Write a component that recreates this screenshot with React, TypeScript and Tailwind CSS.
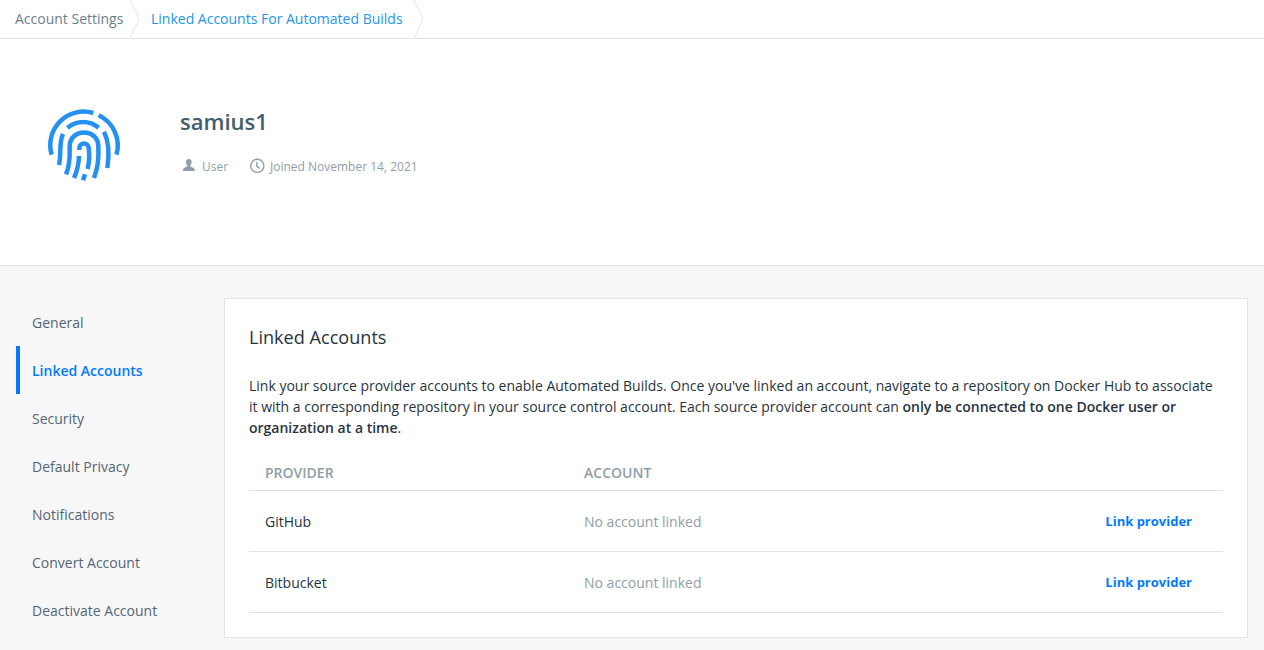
import React from "react";

const navItems = [
  "General",
  "Linked Accounts",
  "Security",
  "Default Privacy",
  "Notifications",
  "Convert Account",
  "Deactivate Account",
];

const providers = ["GitHub", "Bitbucket"];

function Chevron() {
  return (
    <svg width="11" height="39" viewBox="0 0 11 39" fill="none" className="shrink-0">
      <path d="M-1 38.5 H0.500" stroke="#fff" />
      <path d="M0.1 -0.5 L9.1 19 L0.1 38.5" stroke="#e4e6e8" />
    </svg>
  );
}

function Fingerprint() {
  return (
    <svg width="90" height="90" viewBox="0 0 270 270" fill="none" stroke="#2490f2" strokeWidth="13.5">
      <path d="M35 164 A100.500 100.500 0 0 1 160 39" />
      <path d="M176 46 A100.500 100.500 0 0 1 229.500 164" />
      <path d="M82 83 C112 60 148 60 176 83" />
      <path d="M69 102 C56 128 65 158 57 195" />
      <path d="M192 95 C207 125 208 165 202 204" />
      <path d="M78 223 C92 190 89 165 89 140 C89 83 175 83 175 140 C177 175 174 203 162 234" />
      <path d="M118 150 V144 C118 126 146 126 146 144 C149 165 148 185 143 207" />
      <path d="M117 168 C116 193 112 213 102 234" />
      <path d="M135 223 L129 241" />
    </svg>
  );
}

export default function App() {
  return (
    <div className="flex h-[650px] w-[1264px] flex-col overflow-hidden bg-[#f7f7f7] font-['Open_Sans',sans-serif] text-sm text-[#27343f]">
      <nav className="flex h-[39px] shrink-0 border-b border-[#e1e2e4] bg-white leading-[38px]">
        <a className="w-[130px] pl-[15px] text-[#6c7f8e]">Account Settings</a>
        <Chevron />
        <a className="w-[273px] pl-[10px] text-[#2496ed]">Linked Accounts For Automated Builds</a>
        <Chevron />
      </nav>

      <header className="flex h-[227px] shrink-0 border-b border-[#e1e2e4] bg-white pl-10 pt-[61px]">
        <Fingerprint />
        <div className="pl-[50px] pt-[3px]">
          <h1 className="text-[22px] font-semibold leading-[36px] text-[#445d6e]">samius1</h1>
          <div className="mt-[18px] flex h-5 items-center text-xs text-[#8f9ea8]">
            <svg width="18" height="18" viewBox="0 0 18 18" fill="currentColor" className="mr-1 -translate-y-px">
              <path d="M8.8 2C6.9 2 5.9 3.2 6 5c.1 1.500.5 2.500 1.200 3.300v1.200c-1.700.7-4 1.300-4.200 3.100V14h11.600v-1.400c-.2-1.800-2.500-2.400-4.200-3.100V8.300c.7-.8 1.100-1.800 1.200-3.300C11.700 3.200 10.700 2 8.800 2Z" />
            </svg>
            <span className="w-[46px]">User</span>
            <svg width="18" height="18" viewBox="0 0 18 18" fill="none" stroke="currentColor" strokeWidth="1.4" className="mr-1 -translate-y-px">
              <circle cx="9.300" cy="8.800" r="6.600" />
              <path d="M8.800 4.900V9.200l3 2.200" />
            </svg>
            <span>Joined November 14, 2021</span>
          </div>
        </div>
      </header>

      <main className="flex pt-8">
        <aside className="w-[224px] shrink-0 pl-4">
          {navItems.map((item) => (
            <a
              key={item}
              className={
                item === "Linked Accounts"
                  ? "block h-12 border-l-4 border-[#007bff] pl-3 font-semibold leading-[49px] text-[#007bff]"
                  : "block h-12 pl-4 leading-[49px] text-[#556575]"
              }
            >
              {item}
            </a>
          ))}
        </aside>

        <section className="h-[340px] w-[1024px] rounded-[2px] border border-[#e1e2e6] bg-white px-6 pt-[25px]">
          <h2 className="text-[18.1px] leading-[27px]">Linked Accounts</h2>
          <p className="mt-6 leading-[21px]">
            Link your source provider accounts to enable Automated Builds. Once you've linked an account,
            navigate to a repository on Docker Hub to associate it with a corresponding repository in your
            source control account. Each source provider account can{" "}
            <strong className="font-semibold">
              only be connected to one Docker user or organization at a time
            </strong>
            .
          </p>
          <div className="mt-[15px] flex h-[38px] border-b border-[#dfe0e2] pl-4 font-semibold leading-[40px] text-[#8f9ea8]">
            <span className="w-[319px]">PROVIDER</span>
            <span>ACCOUNT</span>
          </div>
          {providers.map((name) => (
            <div key={name} className="flex h-[61px] items-center border-b border-[#dfe0e2] pl-4 pr-[31px]">
              <span className="w-[319px] pt-0.5">{name}</span>
              <span className="flex-1 pt-0.5 text-[#8f9ea8]">No account linked</span>
              <button className="text-[13px] font-bold text-[#007bff]">Link provider</button>
            </div>
          ))}
        </section>
      </main>
    </div>
  );
}
